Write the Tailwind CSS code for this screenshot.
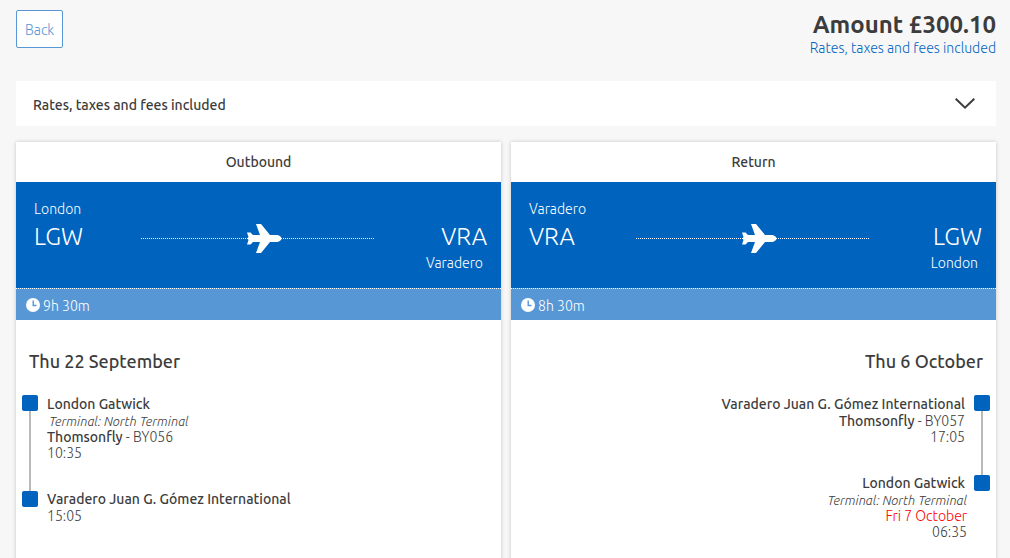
<!DOCTYPE html>
<html lang="en">
  <head>
    <meta charset="UTF-8" />
    <meta name="viewport" content="width=device-width, initial-scale=1.0" />
    <title>Flight summary</title>
    <script src="https://cdn.jsdelivr.net/npm/@tailwindcss/browser@4"></script>
  </head>
  <body class="bg-[#f7f7f7] h-screen overflow-hidden font-['Ubuntu','Noto_Sans',sans-serif] font-light text-sm text-[#3c3c3c]">
    <svg class="hidden">
      <symbol id="plane" viewBox="0 0 36 30">
        <path fill="currentColor" d="M10 0h5l9 11h6c3.500 0 5.500 2 5.500 3.500S33.500 18 30 18h-6l-9 11h-5l4-11H7l-2.500 2.500H1L2.500 16 1.500 14.500 2.500 13 1 8.500h3.500L7 11h7z" />
      </symbol>
      <symbol id="clock" viewBox="0 0 14 14">
        <circle cx="7" cy="7" r="7" fill="currentColor" />
        <path fill="none" stroke="#5797d5" stroke-width="1.400" d="M7.200 2.500v5H10.500" />
      </symbol>
    </svg>

    <main class="pl-4 pr-[14px] pt-[10px]">
      <header class="flex justify-between items-start h-[71px]">
        <button type="button" class="h-[38px] px-2 pt-[2px] bg-white border border-[#5797d5] rounded-xs text-[#5797d5]">Back</button>
        <div class="text-right">
          <h1 class="text-2xl leading-7 font-semibold pt-px">Amount £300.10</h1>
          <a href="#" class="block leading-[18px] text-[#0064bf]">Rates, taxes and fees included</a>
        </div>
      </header>

      <button type="button" class="flex items-center justify-between w-full h-[45px] pl-[17px] pr-[21px] mb-4 bg-white font-medium">
        <span class="pt-[2px]">Rates, taxes and fees included</span>
        <svg class="w-5 h-[11px]" viewBox="0 0 20 11" fill="none" stroke="currentColor" stroke-width="2">
          <path d="M.7.7 10 9.600 19.300.7" />
        </svg>
      </button>

      <div class="grid grid-cols-2 gap-[10px]">
        <section class="bg-white shadow-[0_0_4px_rgba(0,0,0,0.2)] h-[430px]">
          <h2 class="h-10 leading-10 text-center font-medium">Outbound</h2>
          <div class="flex justify-between h-[106px] pl-[18px] pr-[14px] pt-[18px] bg-[#0064bf] text-white">
            <div class="w-[107px]">
              <p class="leading-[18px]">London</p>
              <p class="text-2xl leading-[38px]">LGW</p>
            </div>
            <div class="relative flex-1 h-[77px] flex items-center justify-center">
              <span class="w-full border-t border-dotted border-white"></span>
              <svg class="absolute ml-3 w-9 h-[30px]"><use href="#plane" /></svg>
            </div>
            <div class="w-[113px] text-right pt-[18px]">
              <p class="text-2xl leading-[38px]">VRA</p>
              <p class="leading-[14px] pr-1">Varadero</p>
            </div>
          </div>
          <div class="flex items-center gap-[3px] h-8 px-[10px] bg-[#5797d5] text-white border-t border-dotted border-white">
            <svg class="w-[14px] h-[14px]"><use href="#clock" /></svg>
            <span class="pt-[3px]">9h 30m</span>
          </div>
          <h3 class="px-[13px] pt-[29px] pb-[22px] text-lg leading-6 font-medium">Thu 22 September</h3>
          <ol class="px-[6px]">
            <li class="flex gap-[9px]">
              <div class="flex flex-col items-center">
                <span class="w-4 h-4 rounded-xs bg-[#0064bf]"></span>
                <span class="w-[2px] flex-1 bg-[#b9b9b9]"></span>
              </div>
              <div class="pt-px pb-[30px] leading-4">
                <p class="font-medium pb-px">London Gatwick</p>
                <p class="text-[13px] leading-4 italic pl-[2px]">Terminal: North Terminal</p>
                <p><b class="font-medium">Thomsonfly</b> - BY056</p>
                <p>10:35</p>
              </div>
            </li>
            <li class="flex gap-[9px]">
              <span class="w-4 h-4 rounded-xs bg-[#0064bf]"></span>
              <div class="leading-4">
                <p class="font-medium pb-px">Varadero Juan G. Gómez International</p>
                <p>15:05</p>
              </div>
            </li>
          </ol>
        </section>

        <section class="bg-white shadow-[0_0_4px_rgba(0,0,0,0.2)] h-[430px]">
          <h2 class="h-10 leading-10 text-center font-medium">Return</h2>
          <div class="flex justify-between h-[106px] pl-[18px] pr-[14px] pt-[18px] bg-[#0064bf] text-white">
            <div class="w-[107px]">
              <p class="leading-[18px]">Varadero</p>
              <p class="text-2xl leading-[38px]">VRA</p>
            </div>
            <div class="relative flex-1 h-[77px] flex items-center justify-center">
              <span class="w-full border-t border-dotted border-white"></span>
              <svg class="absolute ml-3 w-9 h-[30px]"><use href="#plane" /></svg>
            </div>
            <div class="w-[113px] text-right pt-[18px]">
              <p class="text-2xl leading-[38px]">LGW</p>
              <p class="leading-[14px] pr-1">London</p>
            </div>
          </div>
          <div class="flex items-center gap-[3px] h-8 px-[10px] bg-[#5797d5] text-white border-t border-dotted border-white">
            <svg class="w-[14px] h-[14px]"><use href="#clock" /></svg>
            <span class="pt-[3px]">8h 30m</span>
          </div>
          <h3 class="px-[13px] pt-[29px] pb-[22px] text-lg leading-6 font-medium text-right">Thu 6 October</h3>
          <ol class="px-[6px]">
            <li class="flex flex-row-reverse gap-[9px]">
              <div class="flex flex-col items-center">
                <span class="w-4 h-4 rounded-xs bg-[#0064bf]"></span>
                <span class="w-[2px] flex-1 bg-[#b9b9b9]"></span>
              </div>
              <div class="pt-px pb-[30px] leading-4 text-right">
                <p class="font-medium pb-px">Varadero Juan G. Gómez International</p>
                <p><b class="font-medium">Thomsonfly</b> - BY057</p>
                <p>17:05</p>
              </div>
            </li>
            <li class="flex flex-row-reverse gap-[7px]">
              <span class="w-4 h-4 rounded-xs bg-[#0064bf]"></span>
              <div class="leading-4 text-right">
                <p class="font-medium pr-[2px] pb-px">London Gatwick</p>
                <p class="text-[13px] leading-4 italic">Terminal: North Terminal</p>
                <p class="text-[#f00]">Fri 7 October</p>
                <p>06:35</p>
              </div>
            </li>
          </ol>
        </section>
      </div>
    </main>
  </body>
</html>
